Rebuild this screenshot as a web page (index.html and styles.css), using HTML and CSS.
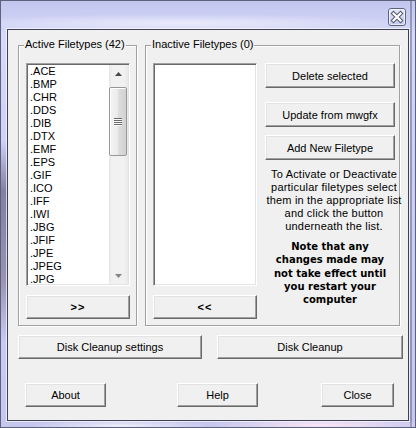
FILE: index.html
```html
<!DOCTYPE html>
<html>
<head>
<meta charset="utf-8">
<link rel="stylesheet" href="styles.css">
</head>
<body>
<div class="window">
  <div class="titlebar">
    <div class="close-btn">
      <svg width="18" height="18" viewBox="0 0 18 18">
        <defs>
          <linearGradient id="cb" x1="0" y1="0" x2="0" y2="1">
            <stop offset="0" stop-color="#e6e8fb"/>
            <stop offset="1" stop-color="#c3c7ec"/>
          </linearGradient>
        </defs>
        <rect x="0.5" y="0.5" width="17" height="17" rx="2.5" fill="url(#cb)" stroke="#5d6380"/>
        <rect x="1.5" y="1.5" width="15" height="15" rx="1.5" fill="none" stroke="#ffffff" stroke-opacity="0.6"/>
        <path d="M5.5 5.5 L12.5 12.5 M12.5 5.5 L5.5 12.5" stroke="#56596c" stroke-width="4.2" stroke-linecap="square"/>
        <path d="M5.5 5.5 L12.5 12.5 M12.5 5.5 L5.5 12.5" stroke="#ffffff" stroke-width="2.2" stroke-linecap="square"/>
      </svg>
    </div>
  </div>
  <div class="client">
    <div class="groups">
      <div class="group group-active">
        <span class="group-label">Active Filetypes (42)</span>
        <div class="listbox">
          <ul class="items">
            <li>.ACE</li><li>.BMP</li><li>.CHR</li><li>.DDS</li><li>.DIB</li><li>.DTX</li>
            <li>.EMF</li><li>.EPS</li><li>.GIF</li><li>.ICO</li><li>.IFF</li><li>.IWI</li>
            <li>.JBG</li><li>.JFIF</li><li>.JPE</li><li>.JPEG</li><li>.JPG</li>
          </ul>
          <div class="scrollbar">
            <div class="sb-btn">
              <svg width="7" height="4" viewBox="0 0 7 4"><polygon points="0,4 3.5,0 7,4" fill="#4a4a4a"/></svg>
            </div>
            <div class="sb-track">
              <div class="sb-thumb"><span class="grip"></span></div>
            </div>
            <div class="sb-btn">
              <svg width="7" height="4" viewBox="0 0 7 4"><polygon points="0,0 7,0 3.5,4" fill="#858585"/></svg>
            </div>
          </div>
        </div>
        <button class="btn btn-move">&gt;&gt;</button>
      </div>
      <div class="group group-inactive">
        <span class="group-label">Inactive Filetypes (0)</span>
        <div class="inactive-body">
          <div class="left-col">
            <div class="listbox"></div>
            <button class="btn btn-move">&lt;&lt;</button>
          </div>
          <div class="right-col">
            <button class="btn btn-side btn-delete">Delete selected</button>
            <button class="btn btn-side btn-update">Update from mwgfx</button>
            <button class="btn btn-side">Add New Filetype</button>
            <p class="info">To Activate or Deactivate<br>particular filetypes select<br>them in the appropriate list<br>and click the button<br>underneath the list.</p>
            <p class="note">Note that any<br>changes made may<br>not take effect until<br>you restart your<br>computer</p>
          </div>
        </div>
      </div>
    </div>
    <div class="row-cleanup">
      <button class="btn btn-settings">Disk Cleanup settings</button>
      <button class="btn btn-cleanup">Disk Cleanup</button>
    </div>
    <div class="row-bottom">
      <button class="btn btn-about">About</button>
      <button class="btn btn-help">Help</button>
      <button class="btn btn-close">Close</button>
    </div>
  </div>
</div>
</body>
</html>
```
FILE: styles.css
```css
html, body {
  margin: 0;
  padding: 0;
}
body {
  font-family: "Liberation Sans", Arial, sans-serif;
  font-size: 11px;
  color: #000;
  background: #c8cbef;
}
.window {
  width: 416px;
  height: 428px;
  box-sizing: border-box;
  border: 1px solid #5c617c;
  padding: 0 6px 6px 6px;
  display: flex;
  flex-direction: column;
  background:
    radial-gradient(ellipse 110px 7px at 320px 424px, rgba(255, 232, 246, 0.95), rgba(255, 232, 246, 0)),
    radial-gradient(ellipse 90px 6px at 120px 425px, rgba(255, 255, 255, 0.7), rgba(255, 255, 255, 0)),
    radial-gradient(ellipse 230px 9px at 180px 22px, rgba(255, 255, 255, 0.55), rgba(255, 255, 255, 0)),
    linear-gradient(180deg, rgba(0,0,0,0) 140px, rgba(70, 62, 96, 0.55) 190px, rgba(95, 78, 100, 0.45) 280px, rgba(0,0,0,0) 340px) left top / 6px 100% no-repeat,
    linear-gradient(90deg, rgba(0,0,0,0) 2px, rgba(80, 84, 120, 0.45) 2px, rgba(80, 84, 120, 0.45) 4px, rgba(0,0,0,0) 4px) right top / 7px 100% no-repeat,
    linear-gradient(180deg, #c2c6ee 0%, #d6d9f9 8%, #cdd0f4 40%, #c6c7ee 100%);
}
.titlebar {
  height: 28px;
  box-sizing: border-box;
  padding-top: 7px;
  display: flex;
  justify-content: flex-end;
  align-items: flex-start;
}
.close-btn {
  width: 18px;
  height: 18px;
  margin-right: 3px;
}
.close-btn svg {
  display: block;
}
.client {
  flex: 1;
  border: 1px solid #3e4057;
  background: #f0f0f0;
  box-shadow: 0 0 0 1px rgba(255, 255, 255, 0.65);
}
.groups {
  display: flex;
  gap: 8px;
  margin: 15px 0 0 10px;
}
.group {
  position: relative;
  box-sizing: border-box;
  height: 281px;
  border: 1px solid #a0a0a0;
  box-shadow: inset 1px 1px 0 #fff, 1px 1px 0 #fff;
  padding: 17px 0 0 7px;
}
.group-active {
  width: 119px;
}
.group-inactive {
  width: 255px;
}
.group-label {
  position: absolute;
  top: -8px;
  left: 5px;
  padding: 0 1px;
  background: #f0f0f0;
  line-height: 13px;
  white-space: nowrap;
}
.listbox {
  box-sizing: border-box;
  width: 104px;
  height: 223px;
  background: #fff;
  border: 1px solid;
  border-color: #a0a0a0 #fff #fff #a0a0a0;
  box-shadow: inset 1px 1px 0 #696969, inset -1px -1px 0 #e3e3e3;
  padding: 1px;
  display: flex;
  overflow: hidden;
}
.items {
  list-style: none;
  margin: 0;
  padding: 0;
  flex: 1;
}
.items li {
  height: 13px;
  line-height: 13px;
  padding-left: 2px;
  white-space: nowrap;
}
.scrollbar {
  width: 19px;
  display: flex;
  flex-direction: column;
  background: linear-gradient(90deg, #e6e6e6 0, #f1f1f1 3px, #f1f1f1 15px, #e9e9e9 19px);
}
.sb-btn {
  height: 17px;
  display: flex;
  align-items: center;
  justify-content: center;
}
.sb-btn svg {
  display: block;
}
.sb-track {
  flex: 1;
}
.sb-thumb {
  box-sizing: border-box;
  margin: 5px 1px 0 0;
  height: 69px;
  border: 1px solid #979797;
  border-radius: 2px;
  background: linear-gradient(90deg, #f3f3f3 0%, #ececec 45%, #dcdcdc 55%, #d2d2d2 100%);
  box-shadow: inset 1px 1px 0 #fff;
  display: flex;
  align-items: center;
  justify-content: center;
}
.grip {
  display: block;
  width: 8px;
  height: 8px;
  background: repeating-linear-gradient(180deg, #6a6a6a 0, #6a6a6a 1px, #fbfbfb 1px, #fbfbfb 2px);
}
.btn {
  box-sizing: border-box;
  margin: 0;
  padding: 0;
  font-family: "Liberation Sans", Arial, sans-serif;
  font-size: 11px;
  color: #000;
  background: #f0f0f0;
  border: 1px solid;
  border-color: #fff #696969 #696969 #fff;
  box-shadow: inset -1px -1px 0 #a0a0a0, inset 1px 1px 0 #e3e3e3;
  height: 24px;
  display: flex;
  align-items: center;
  justify-content: center;
  white-space: nowrap;
}
.btn-move {
  width: 104px;
  margin-top: 9px;
  font-weight: bold;
  letter-spacing: 1px;
}
.inactive-body {
  display: flex;
}
.right-col {
  width: 130px;
  margin-left: 8px;
  display: flex;
  flex-direction: column;
}
.btn-side {
  width: 130px;
  height: 25px;
}
.btn-delete {
  margin-bottom: 14px;
}
.btn-update {
  margin-bottom: 8px;
}
.info {
  margin: 8px -8px 0 0;
  line-height: 13px;
  text-align: center;
  white-space: nowrap;
  letter-spacing: 0.2px;
}
.note {
  margin: 7px 0 0 0;
  font-family: "DejaVu Sans", "Liberation Sans", sans-serif;
  font-weight: bold;
  font-size: 10px;
  line-height: 13.3px;
  text-align: center;
  white-space: nowrap;
}
.row-cleanup {
  display: flex;
  gap: 15px;
  margin: 9px 0 0 10px;
}
.btn-settings {
  width: 184px;
}
.btn-cleanup {
  width: 186px;
}
.row-bottom {
  display: flex;
  margin: 24px 0 0 17px;
}
.btn-about {
  width: 81px;
}
.btn-help {
  width: 81px;
  margin-left: 71px;
}
.btn-close {
  width: 73px;
  margin-left: 63px;
}
```
